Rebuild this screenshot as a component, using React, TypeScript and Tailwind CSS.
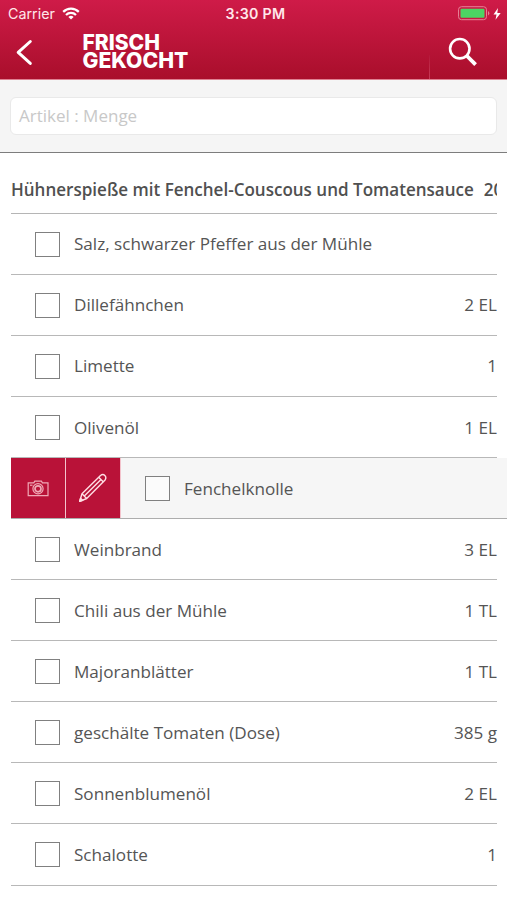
import React from 'react';

type Item = { name: string; amount?: string; swiped?: boolean };

const items: Item[] = [
  { name: 'Salz, schwarzer Pfeffer aus der Mühle' },
  { name: 'Dillefähnchen', amount: '2 EL' },
  { name: 'Limette', amount: '1' },
  { name: 'Olivenöl', amount: '1 EL' },
  { name: 'Fenchelknolle', swiped: true },
  { name: 'Weinbrand', amount: '3 EL' },
  { name: 'Chili aus der Mühle', amount: '1 TL' },
  { name: 'Majoranblätter', amount: '1 TL' },
  { name: 'geschälte Tomaten (Dose)', amount: '385 g' },
  { name: 'Sonnenblumenöl', amount: '2 EL' },
  { name: 'Schalotte', amount: '1' },
];

function StatusBar() {
  return (
    <div className="grid h-[27px] grid-cols-3 items-center pl-[8px] pr-[6px] font-['Inter',sans-serif] text-[#ffe6ea]">
      <div className="flex items-center gap-[7px] pt-px">
        <span className="text-[14.3px] leading-none">Carrier</span>
        <svg width="18" height="13" viewBox="0 0 18 13" fill="none" stroke="#fff" strokeWidth="2.2">
          <path d="M1.2 4.9a11 11 0 0 1 15.6 0" />
          <path d="M4 8a7 7 0 0 1 10 0" />
          <path d="M9 12.6 6.4 9.9a3.8 3.8 0 0 1 5.2 0z" fill="#fff" stroke="none" />
        </svg>
      </div>
      <span className="pl-[2px] pt-px text-center text-[14.2px] font-semibold leading-none tracking-[0.3px]">3:30 PM</span>
      <svg className="justify-self-end" width="44" height="16" viewBox="0 0 44 16">
        <rect x="1.5" y="0.7" width="28" height="13" rx="3" fill="none" stroke="#e58095" />
        <rect x="3.500" y="2.700" width="24" height="9" rx="1.2" fill="#4cd463" />
        <path d="M31 5v4.4q1.300-.7 1.300-2.2T31 5z" fill="#e58095" />
        <path d="M41 2 36.500 8.500h3l-1 5.300L43.700 7h-3.400z" fill="#fff" />
      </svg>
    </div>
  );
}

function Header() {
  return (
    <header className="h-[80px] shrink-0 border-b border-[#df8091] bg-gradient-to-b from-[#cf1b48] to-[#a90e2b]">
      <StatusBar />
      <div className="flex h-[52px] items-stretch">
        <svg className="ml-[14px] mt-[11px]" width="20" height="28" viewBox="0 0 20 28" fill="none" stroke="#fff" strokeWidth="3" strokeLinecap="round" strokeLinejoin="round">
          <path d="M16.300 3.500 4.200 14.400 16.300 25.400" />
        </svg>
        <svg className="ml-[48px] mt-[5px]" width="110" height="40" viewBox="0 0 110 40" fill="#fff" fontFamily="Inter, sans-serif" fontWeight="800" fontSize="21.300">
          <text x="0.500" y="17.700" textLength="77.500" lengthAdjust="spacingAndGlyphs">FRISCH</text>
          <text x="0.500" y="35.900" textLength="105.800" lengthAdjust="spacingAndGlyphs">GEKOCHT</text>
        </svg>
        <div className="ml-auto flex w-[78px]">
          <div className="mt-auto h-[24px] w-px bg-gradient-to-b from-[#b4173a] to-[#c83a57]" />
          <svg className="ml-[18px] mt-[10px]" width="32" height="32" viewBox="0 0 32 32" fill="none" stroke="#fff">
            <circle cx="11.800" cy="11.700" r="9.700" strokeWidth="2.600" />
            <path d="m19 19 8.600 8.700" strokeWidth="3.800" />
          </svg>
        </div>
      </div>
    </header>
  );
}

function CameraIcon() {
  return (
    <svg className="mt-px" width="22" height="17" viewBox="0 0 22 17" fill="none" stroke="#f0a9b6" strokeWidth="1.200">
      <path d="M1.200 2.900h5.600l1-1.800h6.600l1 1.800h5.600v12.700H1.200z" />
      <circle cx="11" cy="8.800" r="5.100" />
      <circle cx="11" cy="8.800" r="3" strokeWidth="1.700" />
      <path d="M3 5.200h2.500" />
    </svg>
  );
}

function PencilIcon() {
  return (
    <svg width="30" height="30" viewBox="0 0 30 30" fill="none" stroke="#ffdfe4" strokeWidth="1.400" strokeLinejoin="round">
      <path d="m1.700 28.300 2.300-7.500L22.500 2.500q2.400-1.900 4.300 0t.3 4.400L8.700 25.500z" />
      <path d="m4 20.800 4.700 4.700M20.700 4.300l4.700 4.700M6.300 23.100 22.800 6.700" />
      <path d="m1.700 28.300.9-3 2.200 2.100z" fill="#ffdfe4" />
    </svg>
  );
}

function Checkbox() {
  return <div className="size-[25px] shrink-0 border border-[#808080] bg-white/60" />;
}

function Row({ item }: { item: Item }) {
  if (item.swiped) {
    return (
      <li className="ml-[11px] flex h-[61.100px] items-stretch border-b border-[#adadad] bg-[#f6f6f6]">
        <div className="flex w-[110px] gap-px bg-[#f3c3cc] pr-px">
          <button className="flex flex-1 items-center justify-center bg-[#b91238]"><CameraIcon /></button>
          <button className="flex flex-1 items-center justify-center bg-[#b91238]"><PencilIcon /></button>
        </div>
        <div className="flex flex-1 items-center gap-[14px] pl-6 pt-px">
          <Checkbox />
          <span>{item.name}</span>
        </div>
      </li>
    );
  }
  return (
    <li className="ml-[11px] mr-[10px] flex h-[61.100px] items-center border-b border-[#b8b8b8] pl-6 pt-px">
      <Checkbox />
      <span className="ml-[14px]">{item.name}</span>
      <span className="ml-auto">{item.amount}</span>
    </li>
  );
}

export default function App() {
  return (
    <main className="flex h-[900px] w-[507px] flex-col overflow-hidden bg-white font-['Open_Sans','Noto_Sans',sans-serif] text-[#555]">
      <Header />
      <div className="h-[73px] shrink-0 border-b border-[#7d7d7d] bg-[#f5f5f5] pl-[10px] pr-[10px] pt-[17px]">
        <div className="flex h-[38px] items-center rounded-[6px] border border-[#e9e9e9] bg-white px-2 text-[17px] text-[#c8c8c8]">
          Artikel : Menge
        </div>
      </div>
      <div className="ml-[11px] mr-[10px] flex h-[60.500px] shrink-0 items-center gap-[10px] overflow-hidden whitespace-nowrap border-b border-[#b5b5b5] pt-[14px] text-[17.040px] font-semibold text-[#505050]">
        <span>Hühnerspieße mit Fenchel-Couscous und Tomatensauce</span>
        <span>20</span>
      </div>
      <ul className="text-[17.100px] whitespace-nowrap">
        {items.map((item) => <Row key={item.name} item={item} />)}
      </ul>
    </main>
  );
}
